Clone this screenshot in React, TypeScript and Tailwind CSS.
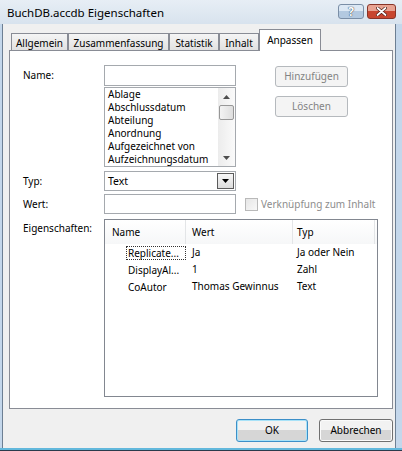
import React from "react";

function Arrow({ up }: { up?: boolean }) {
  return (
    <svg width="7" height="4" viewBox="0 0 7 4">
      <path d={up ? "M3.5 0 L7 4 L0 4 Z" : "M0 0 L7 0 L3.5 4 Z"} fill="#4d4d4d" />
    </svg>
  );
}

function Tab({ label, w, active }: { label: string; w: string; active?: boolean }) {
  if (active) {
    return (
      <div
        className={`${w} h-[22px] -mb-px relative z-10 bg-white border-x border-t border-[#898c95] flex justify-center pt-[4px] leading-[13px]`}
      >
        {label}
      </div>
    );
  }
  return (
    <div
      className={`${w} h-[17px] bg-gradient-to-b from-[#f5f5f5] to-[#e1e1e1] border-x border-t border-[#898c95] flex items-center justify-center leading-none pt-[1px]`}
    >
      {label}
    </div>
  );
}

function PushButton({ label, w, disabled, focused }: { label: string; w: string; disabled?: boolean; focused?: boolean }) {
  if (disabled) {
    return (
      <div className={`${w} h-[21px] rounded-[3px] border border-[#b5b9bd] bg-[#f4f4f4] text-[#838383] flex items-center justify-center`}>
        {label}
      </div>
    );
  }
  return (
    <div
      className={`${w} h-[23px] rounded-[3px] border ${
        focused ? "border-[#3c8fc8] shadow-[inset_0_0_0_1px_#a8e2f8]" : "border-[#707070] shadow-[inset_0_0_0_1px_#fbfbfb]"
      } bg-gradient-to-b from-[#f2f2f2] from-50% to-[#d6d6d6] to-50% flex items-center justify-center`}
    >
      {label}
    </div>
  );
}

export default function App() {
  const listItems = ["Ablage", "Abschlussdatum", "Abteilung", "Anordnung", "Aufgezeichnet von", "Aufzeichnungsdatum"];
  const rows = [
    { name: "Replicate...", wert: "Ja", typ: "Ja oder Nein", focus: true },
    { name: "DisplayAl...", wert: "1", typ: "Zahl" },
    { name: "CoAutor", wert: "Thomas Gewinnus", typ: "Text" },
  ];

  return (
    <div className="w-[402px] h-[451px] flex flex-col bg-[#c4d7eb] border-b border-[#2a3b4c] font-['Noto_Sans',sans-serif] text-[10px] text-black select-none">
      {/* Titelleiste */}
      <div className="h-[24px] shrink-0 flex items-start pl-[7px] pr-[6px] bg-gradient-to-b from-[#e7eef5] to-[#d8e3ee]">
        <span className="text-[11.5px] leading-none mt-[7px]">BuchDB.accdb Eigenschaften</span>
        <div className="ml-auto flex gap-[3px] mt-[4px]">
          <div className="w-[26px] h-[15px] rounded-[3px] border border-[#7a8ea6] bg-gradient-to-b from-[#dce8f4] from-50% to-[#b3c9e0] to-50% flex items-center justify-center text-[12px] font-bold text-white leading-none [text-shadow:0_0_1px_#2b3d52,0_0_1px_#2b3d52]">
            ?
          </div>
          <div className="w-[29px] h-[15px] rounded-[3px] border border-[#873428] bg-gradient-to-b from-[#e8a392] from-50% to-[#c8462f] to-50% flex items-center justify-center">
            <svg width="11" height="9" viewBox="0 0 11 9">
              <path d="M1.5 1 L9.5 8 M9.5 1 L1.5 8" stroke="#4a1a12" strokeWidth="3.2" strokeLinecap="round" />
              <path d="M1.5 1 L9.5 8 M9.5 1 L1.5 8" stroke="#ffffff" strokeWidth="1.8" strokeLinecap="round" />
            </svg>
          </div>
        </div>
      </div>

      {/* Client */}
      <div className="flex-1 ml-[2px] mr-[6px] border-x border-[#6d7f93] bg-[#f0f0f0] flex flex-col">
        {/* Reiter */}
        <div className="h-[26px] shrink-0 flex items-end pl-[8px]">
          <Tab label="Allgemein" w="w-[57px]" />
          <Tab label="Zusammenfassung" w="w-[101px]" />
          <Tab label="Statistik" w="w-[50px]" />
          <Tab label="Inhalt" w="w-[40px]" />
          <Tab label="Anpassen" w="w-[62px]" active />
        </div>

        {/* Register-Inhalt */}
        <div className="ml-[6px] w-[384px] h-[359px] shrink-0 border border-[#898c95] bg-white pl-[13px] pt-[14px] flex flex-col">
          {/* Name */}
          <div className="flex items-start">
            <div className="w-[81px] leading-[21px]">Name:</div>
            <div className="w-[132px] flex flex-col">
              <div className="h-[21px] border border-[#a5a9ae] bg-white" />
              <div className="mt-[1px] h-[80px] border border-[#a5a9ae] bg-white flex">
                <div className="flex-1 pl-[3px]">
                  {listItems.map((item) => (
                    <div key={item} className="h-[13px] leading-[13px] whitespace-nowrap">
                      {item}
                    </div>
                  ))}
                </div>
                <div className="w-[17px] bg-gradient-to-r from-[#ececec] to-[#fafafa] flex flex-col items-center">
                  <div className="h-[17px] flex items-center justify-center">
                    <Arrow up />
                  </div>
                  <div className="w-[15px] h-[15px] rounded-[2px] border border-[#979797] bg-gradient-to-r from-[#f3f3f3] to-[#dedede]" />
                  <div className="flex-1" />
                  <div className="h-[17px] flex items-center justify-center">
                    <Arrow />
                  </div>
                </div>
              </div>
            </div>
            <div className="ml-[39px] mt-[1px] flex flex-col gap-[9px]">
              <PushButton label="Hinzufügen" w="w-[73px]" disabled />
              <PushButton label="Löschen" w="w-[73px]" disabled />
            </div>
          </div>

          {/* Typ */}
          <div className="flex items-start mt-[4px]">
            <div className="w-[81px] leading-[20px]">Typ:</div>
            <div className="w-[132px] h-[20px] border border-[#a5a9ae] bg-white flex">
              <div className="flex-1 pl-[3px] leading-[18px] text-[10.5px]">Text</div>
              <div className="w-[17px] my-[1px] mr-[1px] border border-[#5b5b5b] bg-gradient-to-b from-[#f7f7f7] to-[#dcdcdc] flex items-center justify-center">
                <svg width="7" height="4" viewBox="0 0 7 4">
                  <path d="M0 0 L7 0 L3.5 4 Z" fill="#000" />
                </svg>
              </div>
            </div>
          </div>

          {/* Wert */}
          <div className="flex items-start mt-[3px]">
            <div className="w-[81px] leading-[20px]">Wert:</div>
            <div className="w-[132px] h-[20px] border border-[#a5a9ae] bg-white" />
            <div className="ml-[9px] mt-[4px] w-[13px] h-[13px] border border-[#b9b9b9] bg-gradient-to-br from-[#e6e6e6] to-[#f8f8f8]" />
            <div className="ml-[3px] leading-[20px] text-[#8d8d8d]">Verknüpfung zum Inhalt</div>
          </div>

          {/* Eigenschaften */}
          <div className="flex items-start mt-[5px]">
            <div className="w-[81px] leading-[18px]">Eigenschaften:</div>
            <div className="w-[274px] h-[178px] border border-[#828790] bg-white flex flex-col">
              <div className="h-[24px] flex bg-gradient-to-b from-white to-[#f6f7f8]">
                <div className="w-[81px] border-r border-[#e3e5e7] pl-[7px] leading-[24px]">Name</div>
                <div className="w-[107px] border-r border-[#e3e5e7] pl-[6px] leading-[24px]">Wert</div>
                <div className="w-[82px] border-r border-[#e3e5e7] pl-[4px] leading-[24px]">Typ</div>
                <div className="flex-1" />
              </div>
              {rows.map((r) => (
                <div key={r.name} className="h-[17px] flex items-center whitespace-nowrap">
                  <div className="w-[81px] pl-[21px] flex items-center">
                    <span
                      className={`flex-1 h-[14px] pl-[1px] leading-[12px] border border-dotted ${
                        r.focus ? "border-[#333]" : "border-transparent"
                      }`}
                    >
                      {r.name}
                    </span>
                  </div>
                  <div className="w-[107px] pl-[6px]">{r.wert}</div>
                  <div className="w-[82px] pl-[4px]">{r.typ}</div>
                </div>
              ))}
            </div>
          </div>
        </div>

        {/* Dialog-Schaltflächen */}
        <div className="mt-[10px] flex justify-end gap-[11px] pr-[2px]">
          <PushButton label="OK" w="w-[72px]" focused />
          <PushButton label="Abbrechen" w="w-[74px]" />
        </div>
      </div>
      <div className="h-[2px] shrink-0 bg-[#62b8dc]" />
    </div>
  );
}
